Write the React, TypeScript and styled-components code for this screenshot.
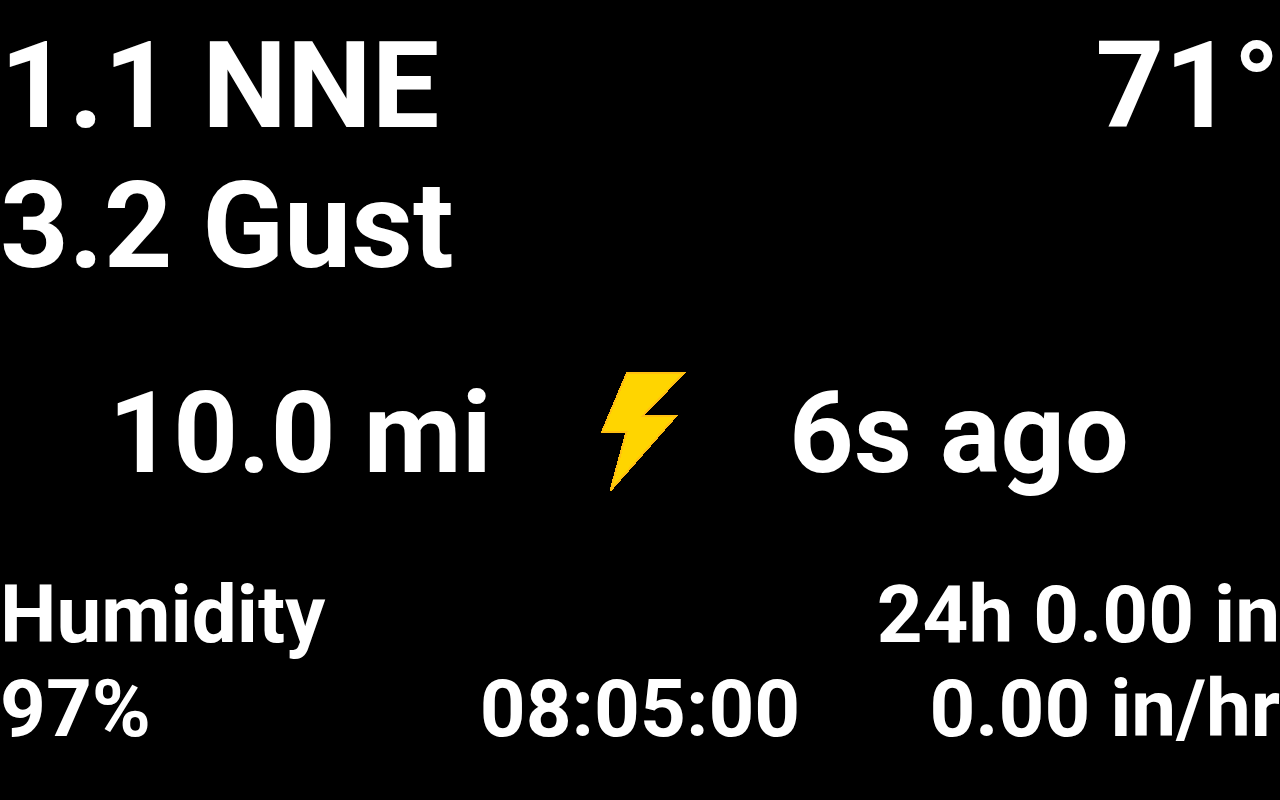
import React from 'react';
import styled, { createGlobalStyle } from 'styled-components';

const GlobalStyle = createGlobalStyle`
  * { box-sizing: border-box; }
  body {
    margin: 0;
    background: #000;
    color: #fff;
    font-family: Roboto, "Liberation Sans", sans-serif;
    font-weight: 700;
  }
`;

const Screen = styled.main`
  display: flex;
  flex-direction: column;
  min-height: 100vh;
  padding: 16px 0;
  white-space: nowrap;
`;

const Top = styled.header`
  display: flex;
  justify-content: space-between;
`;

const Reading = styled.div<{ $end?: boolean }>`
  font-size: 120px;
  line-height: 140px;
  text-align: ${(p) => (p.$end ? 'right' : 'left')};
`;

const Strike = styled.section`
  display: grid;
  grid-template-columns: 600fr 88px 542fr;
  align-items: center;
  margin-top: 66px;
  padding-right: 50px;
`;

const StrikeText = styled.div`
  padding-top: 2px;
  font-size: 113px;
  line-height: 140px;
  text-align: center;
`;

const Bolt = styled.svg`
  width: 88px;
  height: 122px;
`;

const Bottom = styled.footer`
  display: grid;
  grid-template-columns: 1fr auto 1fr;
  align-items: end;
  margin-top: 64px;
`;

const Detail = styled.div<{ $end?: boolean }>`
  font-size: 80px;
  line-height: 94px;
  text-align: ${(p) => (p.$end ? 'right' : 'left')};
`;

export default function App() {
  return (
    <>
      <GlobalStyle />
      <Screen>
        <Top>
          <Reading>
            <div>1.1 NNE</div>
            <div>3.2 Gust</div>
          </Reading>
          <Reading $end>71°</Reading>
        </Top>
        <Strike>
          <StrikeText>10.0 mi</StrikeText>
          <Bolt viewBox="0 0 88 122" role="img" aria-label="Lightning">
            <path
              d="M27 1H84L43 43.500H76.500L10.500 118.500L26.500 60H2Z"
              fill="#ffd500"
              stroke="#ffbf10"
              strokeWidth="2"
              shapeRendering="crispEdges"
            />
          </Bolt>
          <StrikeText>6s ago</StrikeText>
        </Strike>
        <Bottom>
          <Detail>
            <div>Humidity</div>
            <div>97%</div>
          </Detail>
          <Detail>08:05:00</Detail>
          <Detail $end>
            <div>24h 0.00 in</div>
            <div>0.00 in/hr</div>
          </Detail>
        </Bottom>
      </Screen>
    </>
  );
}
